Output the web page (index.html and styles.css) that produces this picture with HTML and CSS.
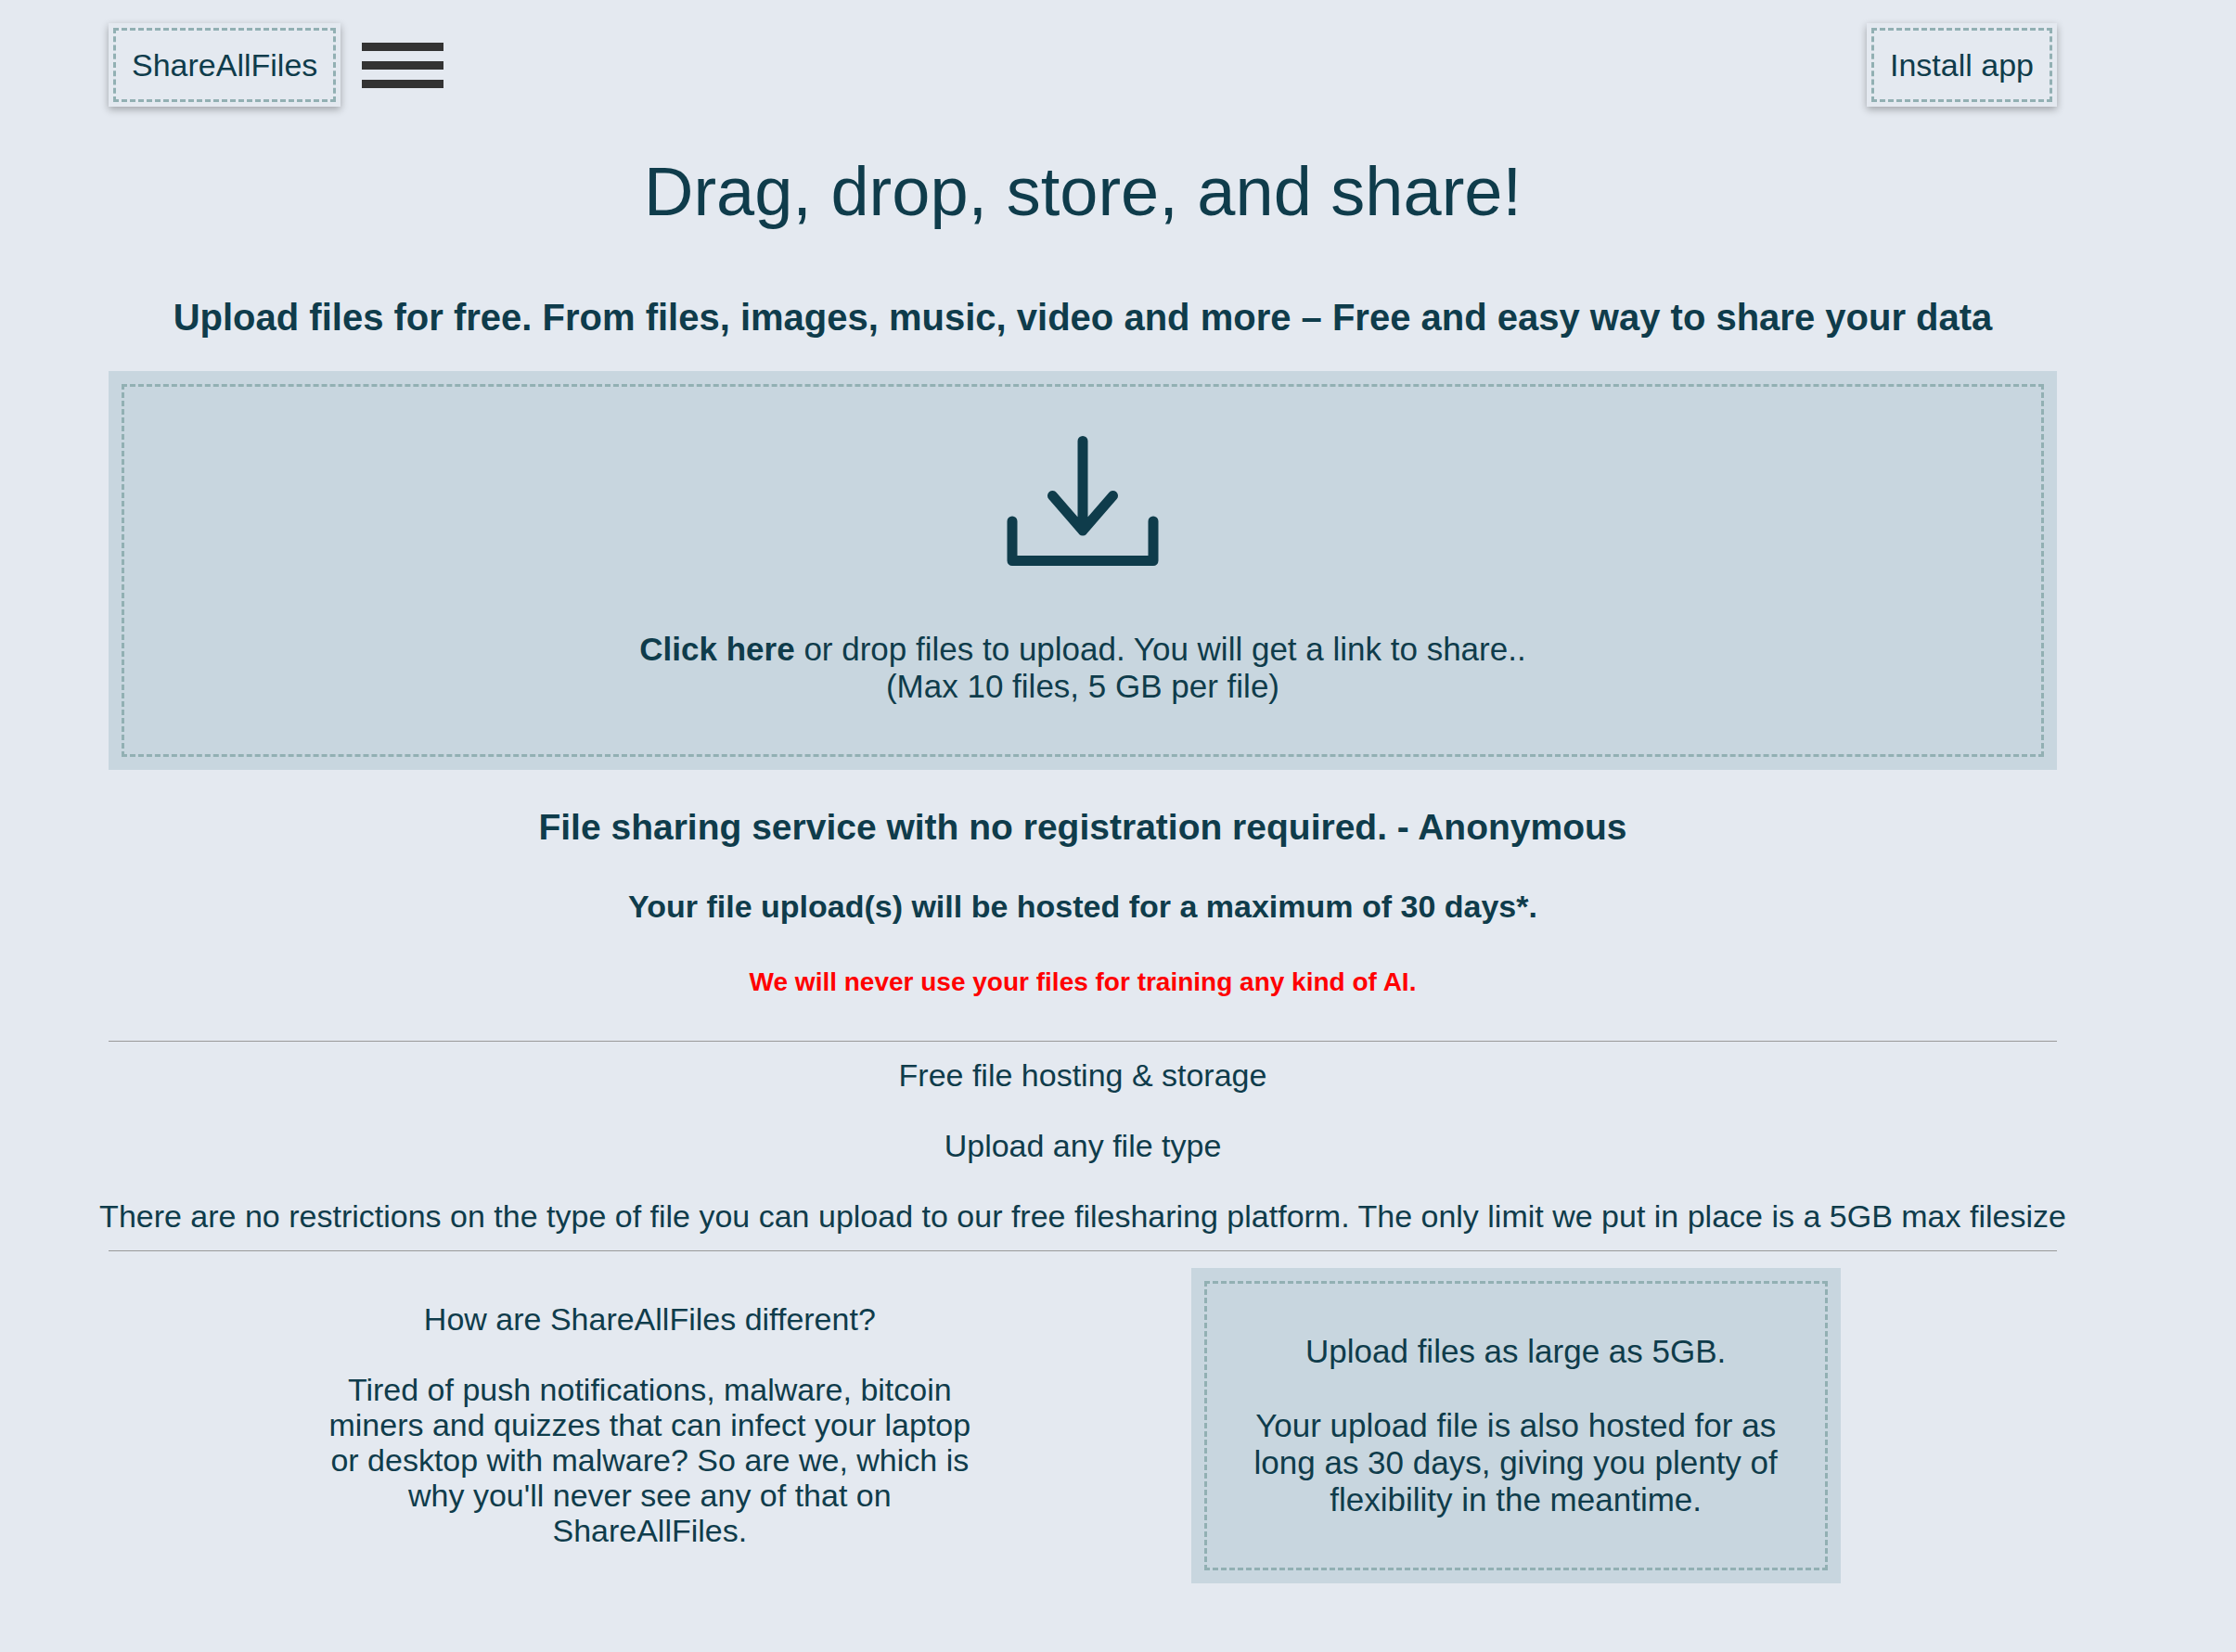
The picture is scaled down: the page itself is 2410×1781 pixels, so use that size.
FILE: index.html
```html
<!DOCTYPE html>
<html lang="en">
<head>
<meta charset="utf-8">
<meta name="viewport" content="width=device-width, initial-scale=1">
<title>ShareAllFiles</title>
<link rel="stylesheet" href="styles.css">
</head>
<body>
<div class="page">
  <header class="topbar">
    <a class="boxed-link" href="#">ShareAllFiles</a>
    <button class="menu" type="button" aria-label="Menu"><span class="bar"></span><span class="bar"></span><span class="bar"></span></button>
    <button class="boxed-link install" type="button">Install app</button>
  </header>
  <main>
    <h1 class="title">Drag, drop, store, and share!</h1>
    <h2 class="subtitle">Upload files for free. From files, images, music, video and more – Free and easy way to share your data</h2>
    <form class="panel dropzone">
      <svg class="drop-icon" viewBox="0 0 164 140" aria-hidden="true">
        <path d="M82 5.500V102M49.500 64.500L82 102L114.500 64.500M6 92V134.500H158V92"/>
      </svg>
      <input class="file-input" type="file" id="files" multiple>
      <label class="drop-label" for="files"><strong>Click here</strong> or drop files to upload. You will get a link to share..<br>(Max 10 files, 5 GB per file)</label>
    </form>
    <h3 class="lead">File sharing service with no registration required. - Anonymous</h3>
    <h4 class="hosted">Your file upload(s) will be hosted for a maximum of 30 days*.</h4>
    <h5 class="notice">We will never use your files for training any kind of AI.</h5>
    <section class="facts">
      <p>Free file hosting &amp; storage</p>
      <p>Upload any file type</p>
      <p>There are no restrictions on the type of file you can upload to our free filesharing platform. The only limit we put in place is a 5GB max filesize</p>
    </section>
    <section class="columns">
      <div class="column">
        <p>How are ShareAllFiles different?</p>
        <p>Tired of push notifications, malware, bitcoin miners and quizzes that can infect your laptop or desktop with malware? So are we, which is why you'll never see any of that on ShareAllFiles.</p>
      </div>
      <div class="column panel large">
        <p>Upload files as large as 5GB.</p>
        <p>Your upload file is also hosted for as long as 30 days, giving you plenty of flexibility in the meantime.</p>
      </div>
    </section>
  </main>
</div>
</body>
</html>
```
FILE: styles.css
```css
* { box-sizing: border-box; }

body {
  margin: 0;
  background: #e4e9f0;
  color: #0f3c4b;
  font: 34px/38px "Liberation Sans", Arial, sans-serif;
  text-align: center;
}

h1, h2, h3, h4, h5, p { margin: 0; }

.page { padding: 25px 193px 74px 117px; }

.topbar { display: flex; align-items: center; gap: 23px; }

.boxed-link {
  padding: 26px 25px;
  border: 0;
  background: #e4e9f0;
  color: inherit;
  font: inherit;
  text-decoration: none;
  outline: 3px dashed #92b0b3;
  outline-offset: -8px;
  box-shadow: 0 3px 8px rgba(0, 0, 0, 0.3);
}

.install { margin-left: auto; }

.menu {
  display: flex;
  flex-direction: column;
  gap: 11px;
  width: 88px;
  padding: 0;
  border: 0;
  background: none;
}

.bar { width: 100%; height: 9px; background: #333; }

.title { margin-top: 50px; font-size: 74px; line-height: 84px; font-weight: 400; }

.subtitle { margin: 70px 0 35px; font-size: 40px; line-height: 46px; }

.panel {
  background: #c8d6df;
  outline: 3px dashed #92b0b3;
  outline-offset: -17px;
  font-size: 35px;
  line-height: 40px;
}

.dropzone { padding: 70px 60px; }

.drop-icon {
  display: block;
  width: 164px;
  height: 140px;
  margin: 0 auto 70px;
  fill: none;
  stroke: #0f3c4b;
  stroke-width: 11;
  stroke-linecap: round;
  stroke-linejoin: round;
}

.file-input { display: none; }

.drop-label { display: block; cursor: pointer; }

.lead { margin-top: 40px; font-size: 39px; line-height: 44px; }

.hosted { margin-top: 44px; font-size: 34px; line-height: 38px; }

.notice { margin: 47px 0; color: #f00; font-size: 28px; line-height: 32px; }

.facts {
  display: grid;
  gap: 38px;
  padding: 17px 0 18px;
  border-top: 1px solid #999;
  border-bottom: 1px solid #999;
}

.facts p { margin: 0 -12px; }

.columns { display: flex; justify-content: space-evenly; margin-top: 18px; }

.column { flex: 0 0 calc(100% / 3); padding-top: 36px; }

.column p + p { margin-top: 38px; }

.large { padding: 70px 60px; }

.large p + p { margin-top: 40px; }
```
